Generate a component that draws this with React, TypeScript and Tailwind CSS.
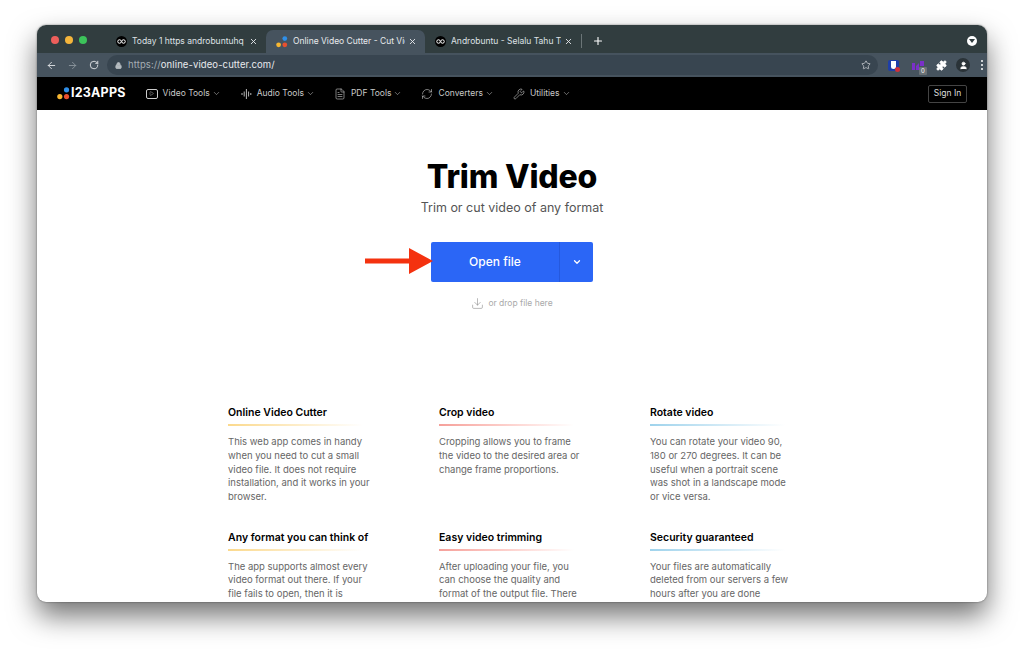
import { ChevronDown, Lock, Star, ArrowLeft, ArrowRight, RotateCw, Puzzle, User, Plus, X, FileText, RefreshCw, Play, Download, Wrench } from 'lucide-react';

const nav = [
  { label: 'Video Tools', icon: 'video', gap: 'mr-[20px]' },
  { label: 'Audio Tools', icon: 'audio', gap: 'mr-[19px]' },
  { label: 'PDF Tools', icon: 'pdf', gap: 'mr-[19px]' },
  { label: 'Converters', icon: 'conv', gap: 'mr-[19px]' },
  { label: 'Utilities', icon: 'util', gap: '' },
];

const features = [
  {
    title: 'Online Video Cutter',
    line: 'from-[#fbd98c]',
    text: 'This web app comes in handy when you need to cut a small video file. It does not require installation, and it works in your browser.',
  },
  {
    title: 'Crop video',
    line: 'from-[#f5a09a]',
    text: 'Cropping allows you to frame the video to the desired area or change frame proportions.',
  },
  {
    title: 'Rotate video',
    line: 'from-[#9fd3ec]',
    text: 'You can rotate your video 90, 180 or 270 degrees. It can be useful when a portrait scene was shot in a landscape mode or vice versa.',
  },
  {
    title: 'Any format you can think of',
    line: 'from-[#fbd98c]',
    text: 'The app supports almost every video format out there. If your file fails to open, then it is',
  },
  {
    title: 'Easy video trimming',
    line: 'from-[#f5a09a]',
    text: 'After uploading your file, you can choose the quality and format of the output file. There',
  },
  {
    title: 'Security guaranteed',
    line: 'from-[#9fd3ec]',
    text: 'Your files are automatically deleted from our servers a few hours after you are done',
  },
];

function InfinityFavicon() {
  return (
    <span className="flex h-[11px] w-[11px] shrink-0 items-center justify-center rounded-full bg-black">
      <svg width="9" height="5" viewBox="0 0 18 10" fill="none" stroke="white" strokeWidth="2">
        <circle cx="5" cy="5" r="3.5" />
        <circle cx="13" cy="5" r="3.5" />
      </svg>
    </span>
  );
}

function AppsLogo({ size = 12 }: { size?: number }) {
  return (
    <svg width={size} height={size} viewBox="0 0 12 12">
      <circle cx="8.8" cy="2.6" r="2.4" fill="#2f8fe8" />
      <circle cx="8.8" cy="8.8" r="2.4" fill="#e8502f" />
      <circle cx="2.6" cy="8.8" r="2.4" fill="#f7b731" />
    </svg>
  );
}

function NavIcon({ name }: { name: string }) {
  if (name === 'video')
    return (
      <span className="flex h-[10px] w-[12px] items-center justify-center rounded-[2px] border border-[#ccc]">
        <Play size={5} strokeWidth={2} className="text-[#ccc]" />
      </span>
    );
  if (name === 'audio')
    return (
      <svg width="11" height="12" viewBox="0 0 11 12" stroke="#ccc" strokeWidth="0.9">
        <path d="M1 5v2M3.2 3.5v5M5.4 1v10M7.6 3.5v5M9.8 5v2" />
      </svg>
    );
  if (name === 'pdf') return <FileText size={12} strokeWidth={1.2} className="text-[#ccc]" />;
  if (name === 'conv') return <RefreshCw size={12} strokeWidth={1.2} className="text-[#ccc]" />;
  return <Wrench size={12} strokeWidth={1.2} className="text-[#ccc]" />;
}

function Tab({ title, active, logo, width }: { title: string; active?: boolean; logo?: boolean; width: string }) {
  return (
    <div
      className={`flex h-[23px] items-center pl-[10px] pr-[8px] ${width} ${
        active ? 'rounded-t-[7px] bg-[#46535e] text-[#e8eaed]' : 'text-[#dfe1e5]'
      }`}
    >
      {logo ? <AppsLogo size={12} /> : <InfinityFavicon />}
      <span className="ml-[5px] flex-1 overflow-hidden whitespace-nowrap text-[8.5px] leading-none">{title}</span>
      <X size={9} strokeWidth={2.4} className="ml-[3px] shrink-0 text-[#e8eaed]" />
    </div>
  );
}

export default function App() {
  return (
    <div className="h-[651px] w-[1024px] overflow-hidden bg-white pl-[37px] pt-[25px] font-['Inter','Liberation_Sans',sans-serif]">
      <div className="flex h-[577px] w-[950px] flex-col overflow-hidden rounded-[9px] bg-white shadow-[0_14px_28px_rgba(0,0,0,0.55),0_0_2px_rgba(0,0,0,0.5)]">
        {/* tab strip */}
        <div className="flex h-[28px] shrink-0 items-end bg-[#313d3f] pl-[14px]">
          <div className="mb-[9px] flex gap-[4px]">
            <span className="h-[8px] w-[8px] rounded-full bg-[#ee5f5b]" />
            <span className="ml-[2px] h-[8px] w-[8px] rounded-full bg-[#f5b53b]" />
            <span className="ml-[2px] h-[8px] w-[8px] rounded-full bg-[#3cc35a]" />
          </div>
          <div className="ml-[19px] flex items-end">
            <Tab title="Today 1 https androbuntuhq w" width="w-[160px]" />
            <Tab title="Online Video Cutter - Cut Vide" active logo width="w-[159px]" />
            <Tab title="Androbuntu - Selalu Tahu Tekn" width="w-[156px]" />
            <span className="mb-[5px] h-[14px] w-px bg-[#6b7577]" />
            <Plus size={12} strokeWidth={2.2} className="mb-[6px] ml-[10px] text-white" />
          </div>
          <span className="mb-[7px] ml-auto mr-[10px] flex h-[10px] w-[10px] items-center justify-center rounded-full bg-white">
            <span className="h-0 w-0 border-x-[3px] border-t-[4px] border-x-transparent border-t-[#313d3f]" />
          </span>
        </div>
        {/* toolbar */}
        <div className="flex h-[24px] shrink-0 items-center bg-[#46535e] pl-[9px] text-[#dfe1e5]">
          <ArrowLeft size={11} strokeWidth={2} />
          <ArrowRight size={11} strokeWidth={2} className="ml-[10px] text-[#8b959c]" />
          <RotateCw size={10} strokeWidth={2.2} className="ml-[11px]" />
          <div className="ml-[8px] flex h-[20px] w-[771px] items-center rounded-full bg-[#384550] pl-[8px] pr-[7px]">
            <Lock size={7} strokeWidth={3} className="text-[#b5bbc0]" fill="#b5bbc0" />
            <span className="ml-[6px] text-[9.5px] tracking-[0.1px] text-[#a5adb3]">
              https://<span className="text-[#e8eaed]">online-video-cutter.com/</span>
            </span>
            <Star size={10} strokeWidth={1.6} className="ml-auto text-[#dfe1e5]" />
          </div>
          <div className="ml-[10px] flex items-center">
            <span className="relative flex h-[11px] w-[11px] items-center justify-center rounded-[2px] bg-[#1f3fa8]">
              <span className="h-[8px] w-[5px] rounded-b-[3px] bg-white" />
              <span className="absolute -bottom-[1px] -right-[1px] h-[5px] w-[5px] rounded-full bg-[#d0303a]" />
            </span>
            <span className="relative ml-[13px] block h-[11px] w-[13px]">
              <svg width="13" height="11" viewBox="0 0 13 11" fill="#7b2fc9">
                <path d="M0 3l3 0 0 7-3 0zM4 6l3-3 0 7-3 0zM8 1l4 0 0 5-4 0z" />
              </svg>
              <span className="absolute -bottom-[4px] right-[-2px] flex h-[8px] w-[8px] items-center justify-center rounded-[1px] bg-[#6b7277] text-[6px] leading-none text-white">
                0
              </span>
            </span>
            <Puzzle size={11} fill="white" className="ml-[11px] text-white" />
            <span className="ml-[9px] flex h-[14px] w-[14px] items-center justify-center rounded-full bg-[#2a3338]">
              <User size={9} fill="white" className="text-white" />
            </span>
            <span className="ml-[11px] flex flex-col gap-[2px]">
              <span className="h-[2px] w-[2px] rounded-full bg-white" />
              <span className="h-[2px] w-[2px] rounded-full bg-white" />
              <span className="h-[2px] w-[2px] rounded-full bg-white" />
            </span>
          </div>
        </div>
        {/* site nav */}
        <div className="flex h-[33px] shrink-0 items-center bg-black pl-[20px] pr-[20px] text-[#c9c9c9]">
          <AppsLogo size={13} />
          <span className="ml-[1px] text-[12.5px] font-bold tracking-[0.2px] text-white">I23APPS</span>
          <div className="ml-[20px] flex items-center">
            {nav.map((n) => (
              <div key={n.label} className={`flex items-center ${n.gap}`}>
                <NavIcon name={n.icon} />
                <span className="ml-[5px] text-[8.5px]">{n.label}</span>
                <ChevronDown size={9} strokeWidth={1.4} className="ml-[2px]" />
              </div>
            ))}
          </div>
          <span className="ml-auto flex h-[18px] w-[39px] items-center justify-center rounded-[2px] border border-[#444] text-[8.5px] text-[#ddd]">
            Sign In
          </span>
        </div>
        {/* page */}
        <div className="min-h-0 flex-1 overflow-hidden">
          <div className="flex flex-col items-center pt-[49px]">
            <h1 className="text-[32px] font-extrabold leading-[36px] tracking-[-0.2px] text-black">Trim Video</h1>
            <p className="mt-[4px] text-[12.5px] leading-[18px] text-[#555]">Trim or cut video of any format</p>
            <div className="relative mt-[25px] flex h-[40px] w-[162px] rounded-[2px] bg-[#2b66f6] text-white">
              <span className="flex flex-1 items-center justify-center text-[12px] font-medium">Open file</span>
              <span className="flex w-[34px] items-center justify-center border-l border-[#2559de]">
                <ChevronDown size={10} strokeWidth={3} />
              </span>
              {/* annotation arrow */}
              <svg className="absolute left-[-66px] top-[6px]" width="68" height="26" viewBox="0 0 68 26">
                <path d="M0 10.5h44V0l24 13-24 13V15.5H0z" fill="#f4320f" />
              </svg>
            </div>
            <div className="mt-[15px] flex items-center text-[8.5px] text-[#aaa]">
              <Download size={13} strokeWidth={1.1} className="mr-[4px] text-[#888]" />
              or drop file here
            </div>
          </div>
          <div className="ml-[191px] mt-[96px] grid w-[633px] grid-cols-3">
            {features.map((f) => (
              <div key={f.title} className="h-[124.5px] pr-[66px]">
                <h3 className="whitespace-nowrap text-[10.5px] font-semibold leading-[14px] text-black">{f.title}</h3>
                <div className={`mt-[4px] h-[2px] w-[135px] bg-gradient-to-r ${f.line} to-white`} />
                <p className="mt-[9px] w-[145px] text-[9.5px] leading-[13.8px] text-[#666]">{f.text}</p>
              </div>
            ))}
          </div>
        </div>
      </div>
    </div>
  );
}
